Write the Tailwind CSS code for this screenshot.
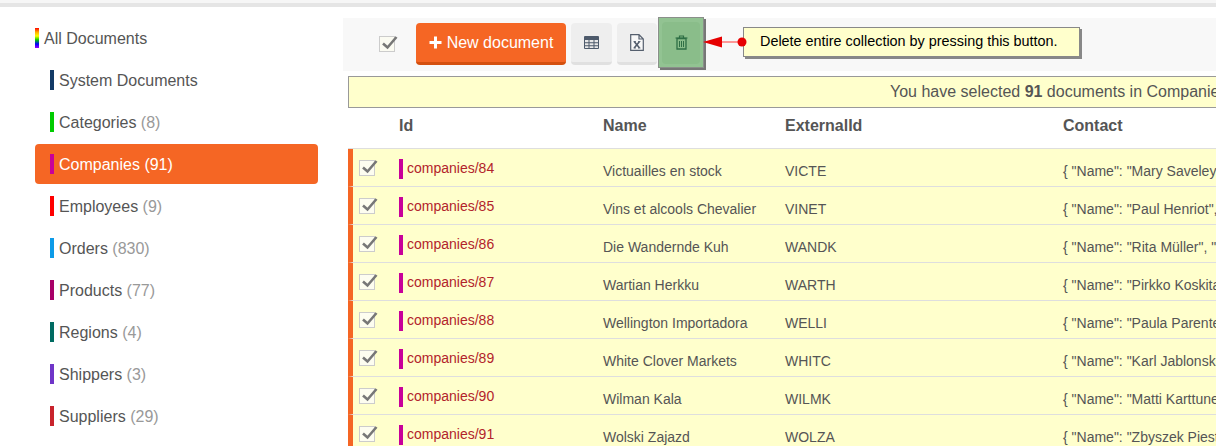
<!DOCTYPE html>
<html lang="en">
<head>
  <meta charset="UTF-8">
  <title>Documents</title>
  <script src="https://cdn.jsdelivr.net/npm/@tailwindcss/browser@4"></script>
</head>
<body class="bg-white font-['Liberation_Sans',Arial,sans-serif] text-[#555]">
  <div class="w-[1216px] h-[446px] overflow-hidden">
    <!-- Top bar -->
    <div class="h-[3px] bg-[#f6f6f6]"></div>
    <div class="h-[4px] bg-[#e5e5e5]"></div>

    <div class="flex">
      <!-- Sidebar -->
      <aside class="w-[343px] shrink-0 pt-[11px] pl-[35px] pr-[25px] text-[16px] flex flex-col gap-[2px]">
        <a class="h-[40px] pt-[2px] flex items-center gap-[5px]"><span class="w-[4px] h-[20px] -mt-[2px] bg-[linear-gradient(to_bottom,#f00,#fa0,#ff0,#0c0,#00f,#90f)]"></span>All Documents</a>
        <a class="h-[40px] pt-[2px] flex items-center gap-[5px] pl-[15px]"><span class="w-[4px] h-[20px] -mt-[2px] bg-[#123a66]"></span>System Documents</a>
        <a class="h-[40px] pt-[2px] flex items-center gap-[5px] pl-[15px]"><span class="w-[4px] h-[20px] -mt-[2px] bg-[#00cc00]"></span><span>Categories <span class="text-[#999]">(8)</span></span></a>
        <a class="h-[40px] pt-[2px] flex items-center gap-[5px] pl-[15px] bg-[#f56624] rounded-[4px] text-white"><span class="w-[4px] h-[20px] -mt-[2px] bg-[#c8009a]"></span>Companies (91)</a>
        <a class="h-[40px] pt-[2px] flex items-center gap-[5px] pl-[15px]"><span class="w-[4px] h-[20px] -mt-[2px] bg-[#ff0000]"></span><span>Employees <span class="text-[#999]">(9)</span></span></a>
        <a class="h-[40px] pt-[2px] flex items-center gap-[5px] pl-[15px]"><span class="w-[4px] h-[20px] -mt-[2px] bg-[#0d9be8]"></span><span>Orders <span class="text-[#999]">(830)</span></span></a>
        <a class="h-[40px] pt-[2px] flex items-center gap-[5px] pl-[15px]"><span class="w-[4px] h-[20px] -mt-[2px] bg-[#a80068]"></span><span>Products <span class="text-[#999]">(77)</span></span></a>
        <a class="h-[40px] pt-[2px] flex items-center gap-[5px] pl-[15px]"><span class="w-[4px] h-[20px] -mt-[2px] bg-[#006b62]"></span><span>Regions <span class="text-[#999]">(4)</span></span></a>
        <a class="h-[40px] pt-[2px] flex items-center gap-[5px] pl-[15px]"><span class="w-[4px] h-[20px] -mt-[2px] bg-[#6f35c8]"></span><span>Shippers <span class="text-[#999]">(3)</span></span></a>
        <a class="h-[40px] pt-[2px] flex items-center gap-[5px] pl-[15px]"><span class="w-[4px] h-[20px] -mt-[2px] bg-[#c8232c]"></span><span>Suppliers <span class="text-[#999]">(29)</span></span></a>
      </aside>

      <!-- Main -->
      <main class="flex-1 min-w-0 pt-[11px]">
        <!-- Toolbar -->
        <div class="relative h-[53px] bg-[#f8f8f8] flex items-start pt-[5px] pl-[36px]">
          <span class="relative w-[16px] h-[16px] mt-[13px] border border-[#ccc] bg-[#fbfbf2] shrink-0">
            <svg class="absolute left-[1px] -top-[2px]" width="17" height="16" viewBox="0 0 17 16"><path d="M2 8.500L6.500 12.500L15.500 2" fill="none" stroke="#777" stroke-width="2.600"/></svg>
          </span>
          <button class="ml-[21px] w-[150px] h-[42px] bg-[#f56624] border-b-[3px] border-[#d4500f] rounded-[4px] text-white text-[16px] flex items-center justify-center gap-[5px]">
            <svg width="13" height="13" viewBox="0 0 13 13"><path d="M5 0.500h3v4.500h4.500v3H8v4.500H5V8H0.500V5H5z" fill="#fff"/></svg>New document
          </button>
          <button class="ml-[5px] w-[41px] h-[42px] bg-[#eeeeee] border-b-[3px] border-[#e0e0e0] rounded-[4px] flex items-center justify-center">
            <svg width="15" height="13" viewBox="0 0 15 13"><rect x="0" y="0" width="15" height="13" rx="1" fill="#4d5a6b"/><path d="M1 4h3.500v2.200H1zM5.500 4H9.500v2.200H5.500zM10.500 4H14v2.200h-3.500zM1 7.200h3.500v2H1zM5.500 7.200H9.500v2H5.500zM10.500 7.200H14v2h-3.500zM1 10.200h3.500V12H1zM5.500 10.200H9.500V12H5.500zM10.500 10.200H14V12h-3.500z" fill="#e8e8e8"/></svg>
          </button>
          <button class="ml-[5px] w-[40px] h-[42px] bg-[#eeeeee] border-b-[3px] border-[#e0e0e0] rounded-[4px] flex items-center justify-center">
            <svg width="14" height="17" viewBox="0 0 14 17"><path d="M0.700 0.700H9L13.300 5V16.300H0.700zM9 0.700V5H13.300" fill="#f8f8f8" stroke="#555f6e" stroke-width="1.200"/><path d="M4.200 7.500L9.500 14M9.500 7.500L4.200 14" stroke="#555f6e" stroke-width="1.600" fill="none"/><path d="M3.500 7.500h2.500M8 7.500h2.500M3.500 14h2.500M8 14h2.500" stroke="#555f6e" stroke-width="0.800"/></svg>
          </button>
          <button class="ml-[5px] w-[38px] h-[42px] bg-[#eeeeee] rounded-[4px]"></button>

          <!-- Annotation over the delete button -->
          <div class="absolute left-[315px] -top-[1px] w-[46px] h-[51px] bg-[#92c392] border border-[#8a8f8a] shadow-[2px_2px_0_#777] flex items-center justify-center">
            <div class="w-[38px] h-[42px] bg-[#8abd8a] rounded-[4px] flex items-center justify-center">
              <svg width="13" height="15" viewBox="0 0 13 15"><path d="M0.500 3h12M4.500 3V1h4v2" fill="none" stroke="#2f6f45" stroke-width="1.200"/><path d="M2 3.500V14h9V3.500z" fill="none" stroke="#2f6f45" stroke-width="1.300"/><path d="M4.500 6v6M6.500 6v6M8.500 6v6" stroke="#2f6f45" stroke-width="1"/></svg>
            </div>
          </div>
          <div class="absolute left-[400px] top-[9px] w-[337px] h-[30px] bg-[#ffffcc] border border-[#888] shadow-[2px_2px_0_#888] pl-[16px] text-[14.4px] text-black flex items-center whitespace-nowrap">Delete entire collection by pressing this button.</div>
          <svg class="absolute left-[360px] top-[15px]" width="45" height="18" viewBox="0 0 45 18"><path d="M19 9H38" stroke="#f77" stroke-width="1.500"/><path d="M0 9L19 3.500V14.500z" fill="#e60000"/><circle cx="39" cy="9" r="4.500" fill="#e60000"/></svg>
        </div>

        <!-- Selection banner -->
        <div class="mt-[5px] ml-[5px] h-[32px] w-[1000px] bg-[#ffffcc] border border-[#999] pl-[541px] text-[16px] flex items-center whitespace-nowrap">You have selected&nbsp;<b>91</b>&nbsp;documents in Companies</div>

        <div class="ml-[5px]">
          <!-- Header -->
          <div class="grid grid-cols-[51px_204px_182px_278px_1fr] h-[41px] border-b border-[#dedede] pt-[6px] text-[16px] font-bold whitespace-nowrap">
            <span></span><span>Id</span><span>Name</span><span>ExternalId</span><span>Contact</span>
          </div>

          <!-- Rows -->
          <div class="grid grid-cols-[46px_204px_182px_278px_1fr] items-center h-[38px] bg-[#ffffcc] border-l-[5px] border-l-[#f56624] border-b border-b-[#dedede] text-[14px] whitespace-nowrap overflow-hidden">
            <span class="relative w-[16px] h-[16px] ml-[6px] border border-[#ccc] bg-[#fdfdf0]"><svg class="absolute left-[1px] -top-[2px]" width="17" height="16" viewBox="0 0 17 16"><path d="M2 8.500L6.500 12.500L15.500 2" fill="none" stroke="#777" stroke-width="2.600"/></svg></span>
            <span class="flex items-center gap-[4px] text-[#b2232b] mt-[2px]"><span class="w-[4px] h-[20px] bg-[#c8009a]"></span>companies/84</span>
            <span class="mt-[8px]">Victuailles en stock</span><span class="mt-[8px]">VICTE</span><span class="mt-[8px]">{ "Name": "Mary Saveley", "Title": "Sales Agent" }</span>
          </div>
          <div class="grid grid-cols-[46px_204px_182px_278px_1fr] items-center h-[38px] bg-[#ffffcc] border-l-[5px] border-l-[#f56624] border-b border-b-[#dedede] text-[14px] whitespace-nowrap overflow-hidden">
            <span class="relative w-[16px] h-[16px] ml-[6px] border border-[#ccc] bg-[#fdfdf0]"><svg class="absolute left-[1px] -top-[2px]" width="17" height="16" viewBox="0 0 17 16"><path d="M2 8.500L6.500 12.500L15.500 2" fill="none" stroke="#777" stroke-width="2.600"/></svg></span>
            <span class="flex items-center gap-[4px] text-[#b2232b] mt-[2px]"><span class="w-[4px] h-[20px] bg-[#c8009a]"></span>companies/85</span>
            <span class="mt-[8px]">Vins et alcools Chevalier</span><span class="mt-[8px]">VINET</span><span class="mt-[8px]">{ "Name": "Paul Henriot", "Title": "Accounting Manager" }</span>
          </div>
          <div class="grid grid-cols-[46px_204px_182px_278px_1fr] items-center h-[38px] bg-[#ffffcc] border-l-[5px] border-l-[#f56624] border-b border-b-[#dedede] text-[14px] whitespace-nowrap overflow-hidden">
            <span class="relative w-[16px] h-[16px] ml-[6px] border border-[#ccc] bg-[#fdfdf0]"><svg class="absolute left-[1px] -top-[2px]" width="17" height="16" viewBox="0 0 17 16"><path d="M2 8.500L6.500 12.500L15.500 2" fill="none" stroke="#777" stroke-width="2.600"/></svg></span>
            <span class="flex items-center gap-[4px] text-[#b2232b] mt-[2px]"><span class="w-[4px] h-[20px] bg-[#c8009a]"></span>companies/86</span>
            <span class="mt-[8px]">Die Wandernde Kuh</span><span class="mt-[8px]">WANDK</span><span class="mt-[8px]">{ "Name": "Rita Müller", "Title": "Sales Representative" }</span>
          </div>
          <div class="grid grid-cols-[46px_204px_182px_278px_1fr] items-center h-[38px] bg-[#ffffcc] border-l-[5px] border-l-[#f56624] border-b border-b-[#dedede] text-[14px] whitespace-nowrap overflow-hidden">
            <span class="relative w-[16px] h-[16px] ml-[6px] border border-[#ccc] bg-[#fdfdf0]"><svg class="absolute left-[1px] -top-[2px]" width="17" height="16" viewBox="0 0 17 16"><path d="M2 8.500L6.500 12.500L15.500 2" fill="none" stroke="#777" stroke-width="2.600"/></svg></span>
            <span class="flex items-center gap-[4px] text-[#b2232b] mt-[2px]"><span class="w-[4px] h-[20px] bg-[#c8009a]"></span>companies/87</span>
            <span class="mt-[8px]">Wartian Herkku</span><span class="mt-[8px]">WARTH</span><span class="mt-[8px]">{ "Name": "Pirkko Koskitalo", "Title": "Accounting Manager" }</span>
          </div>
          <div class="grid grid-cols-[46px_204px_182px_278px_1fr] items-center h-[38px] bg-[#ffffcc] border-l-[5px] border-l-[#f56624] border-b border-b-[#dedede] text-[14px] whitespace-nowrap overflow-hidden">
            <span class="relative w-[16px] h-[16px] ml-[6px] border border-[#ccc] bg-[#fdfdf0]"><svg class="absolute left-[1px] -top-[2px]" width="17" height="16" viewBox="0 0 17 16"><path d="M2 8.500L6.500 12.500L15.500 2" fill="none" stroke="#777" stroke-width="2.600"/></svg></span>
            <span class="flex items-center gap-[4px] text-[#b2232b] mt-[2px]"><span class="w-[4px] h-[20px] bg-[#c8009a]"></span>companies/88</span>
            <span class="mt-[8px]">Wellington Importadora</span><span class="mt-[8px]">WELLI</span><span class="mt-[8px]">{ "Name": "Paula Parente", "Title": "Sales Manager" }</span>
          </div>
          <div class="grid grid-cols-[46px_204px_182px_278px_1fr] items-center h-[38px] bg-[#ffffcc] border-l-[5px] border-l-[#f56624] border-b border-b-[#dedede] text-[14px] whitespace-nowrap overflow-hidden">
            <span class="relative w-[16px] h-[16px] ml-[6px] border border-[#ccc] bg-[#fdfdf0]"><svg class="absolute left-[1px] -top-[2px]" width="17" height="16" viewBox="0 0 17 16"><path d="M2 8.500L6.500 12.500L15.500 2" fill="none" stroke="#777" stroke-width="2.600"/></svg></span>
            <span class="flex items-center gap-[4px] text-[#b2232b] mt-[2px]"><span class="w-[4px] h-[20px] bg-[#c8009a]"></span>companies/89</span>
            <span class="mt-[8px]">White Clover Markets</span><span class="mt-[8px]">WHITC</span><span class="mt-[8px]">{ "Name": "Karl Jablonski", "Title": "Owner" }</span>
          </div>
          <div class="grid grid-cols-[46px_204px_182px_278px_1fr] items-center h-[38px] bg-[#ffffcc] border-l-[5px] border-l-[#f56624] border-b border-b-[#dedede] text-[14px] whitespace-nowrap overflow-hidden">
            <span class="relative w-[16px] h-[16px] ml-[6px] border border-[#ccc] bg-[#fdfdf0]"><svg class="absolute left-[1px] -top-[2px]" width="17" height="16" viewBox="0 0 17 16"><path d="M2 8.500L6.500 12.500L15.500 2" fill="none" stroke="#777" stroke-width="2.600"/></svg></span>
            <span class="flex items-center gap-[4px] text-[#b2232b] mt-[2px]"><span class="w-[4px] h-[20px] bg-[#c8009a]"></span>companies/90</span>
            <span class="mt-[8px]">Wilman Kala</span><span class="mt-[8px]">WILMK</span><span class="mt-[8px]">{ "Name": "Matti Karttunen", "Title": "Owner/Marketing Assistant" }</span>
          </div>
          <div class="grid grid-cols-[46px_204px_182px_278px_1fr] items-center h-[38px] bg-[#ffffcc] border-l-[5px] border-l-[#f56624] border-b border-b-[#dedede] text-[14px] whitespace-nowrap overflow-hidden">
            <span class="relative w-[16px] h-[16px] ml-[6px] border border-[#ccc] bg-[#fdfdf0]"><svg class="absolute left-[1px] -top-[2px]" width="17" height="16" viewBox="0 0 17 16"><path d="M2 8.500L6.500 12.500L15.500 2" fill="none" stroke="#777" stroke-width="2.600"/></svg></span>
            <span class="flex items-center gap-[4px] text-[#b2232b] mt-[2px]"><span class="w-[4px] h-[20px] bg-[#c8009a]"></span>companies/91</span>
            <span class="mt-[8px]">Wolski Zajazd</span><span class="mt-[8px]">WOLZA</span><span class="mt-[8px]">{ "Name": "Zbyszek Piestrzeniewicz", "Title": "Owner" }</span>
          </div>
        </div>
      </main>
    </div>
  </div>
</body>
</html>
